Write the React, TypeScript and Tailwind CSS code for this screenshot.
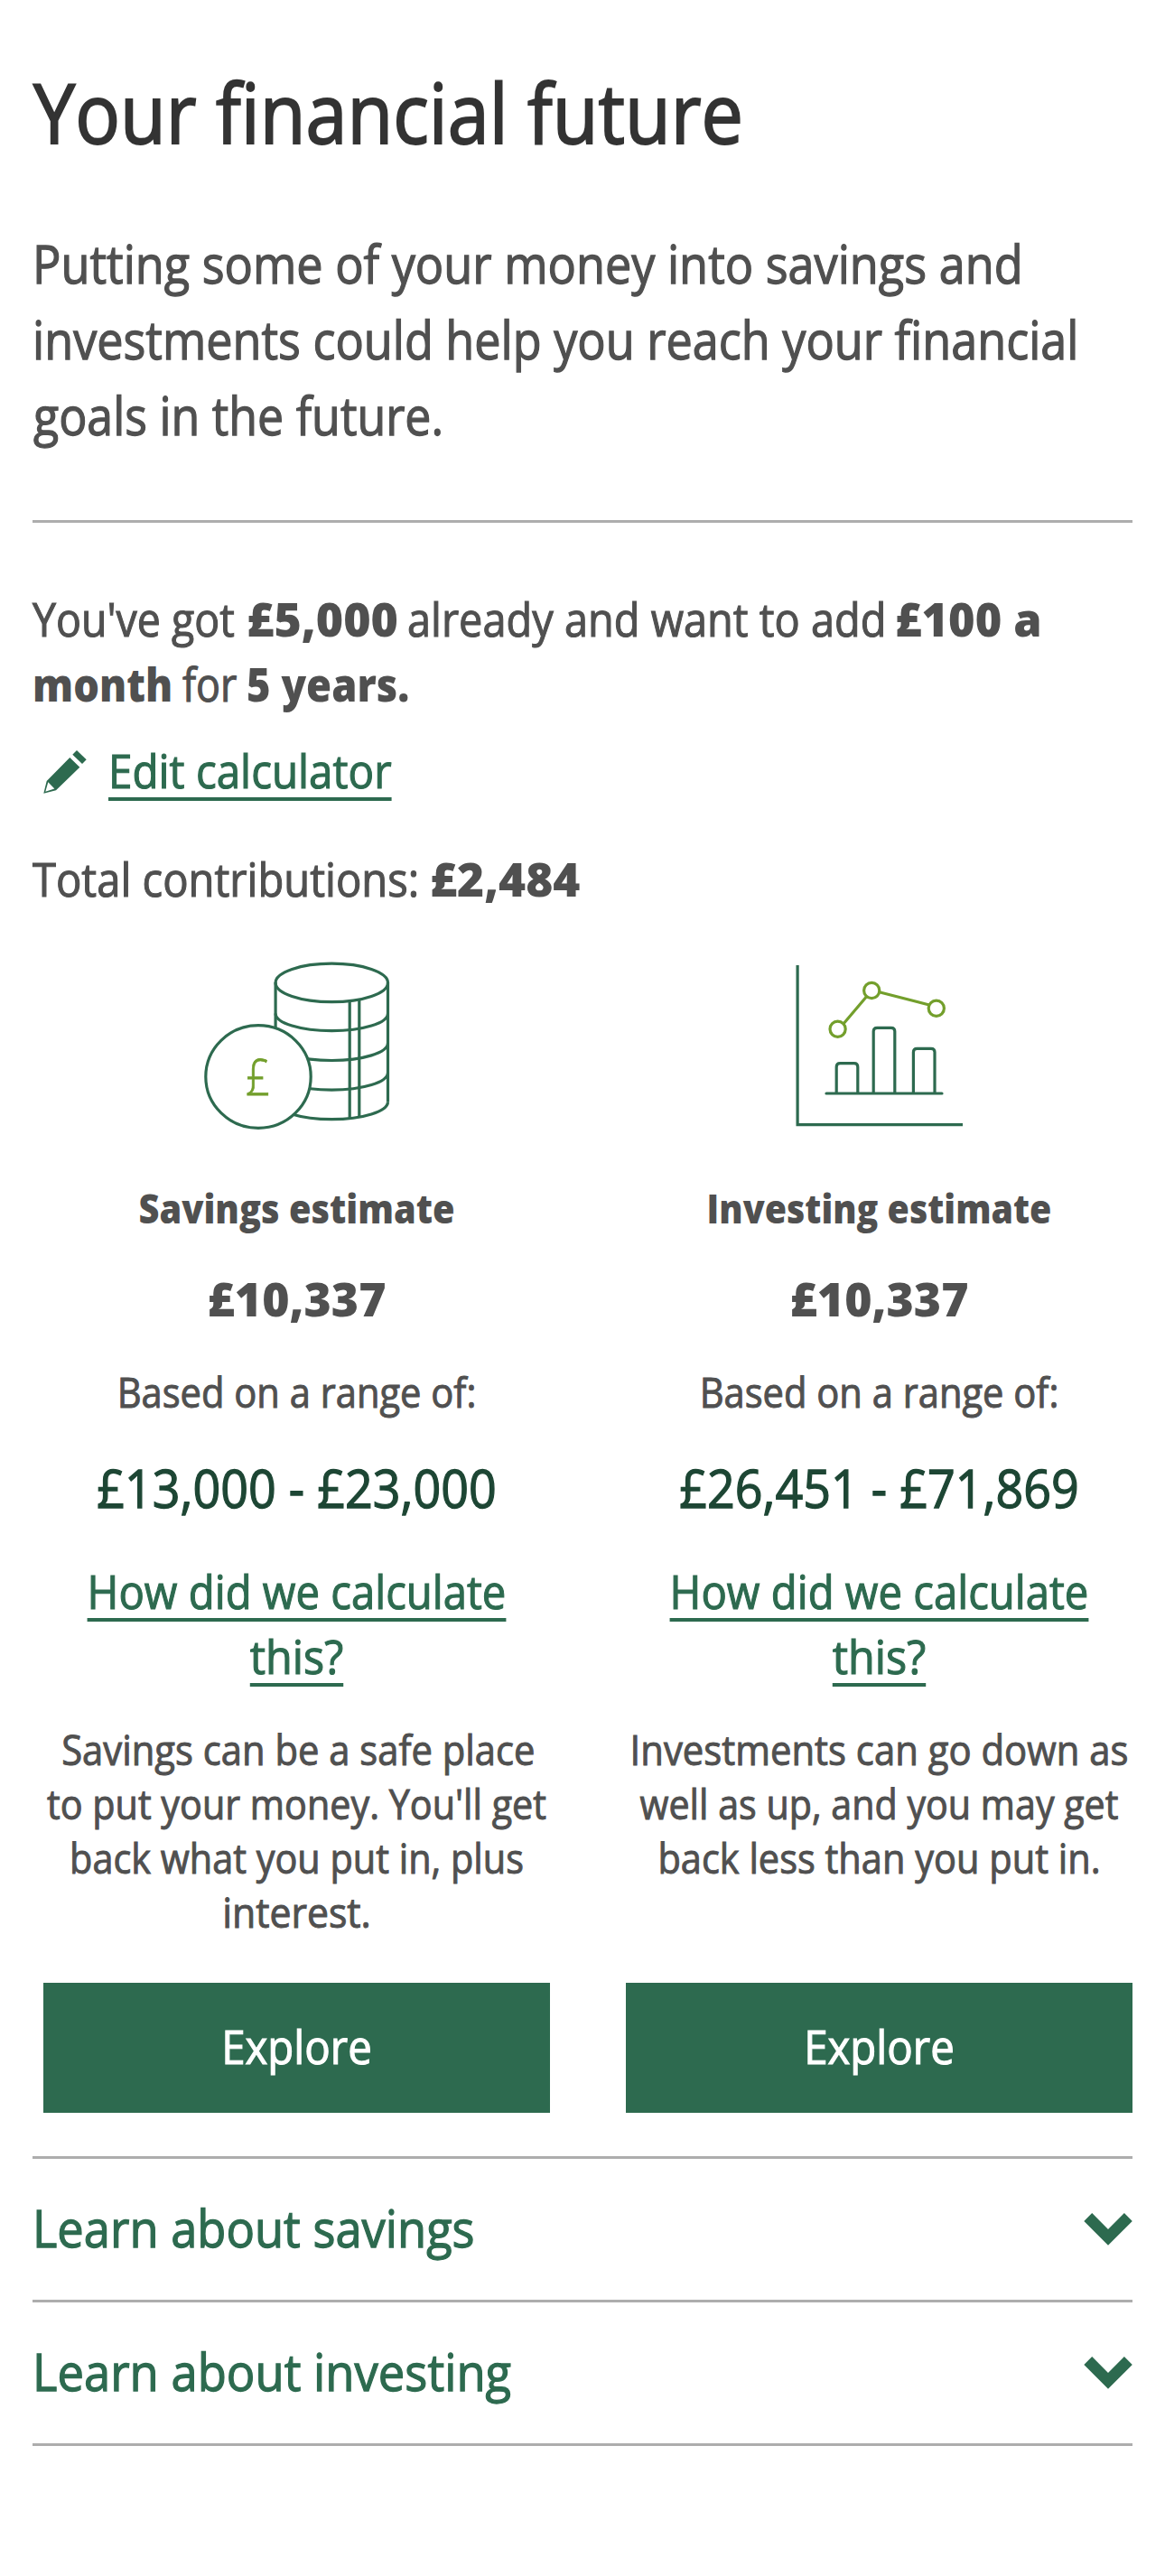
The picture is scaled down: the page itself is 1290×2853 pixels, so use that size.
import type { ReactNode } from "react";

function Line({ className = "", children }: { className?: string; children: ReactNode }) {
  return <span className={`block whitespace-nowrap [-webkit-text-stroke:0.022em] ${className}`}>{children}</span>;
}

function Strong({ className = "", children }: { className?: string; children: ReactNode }) {
  return <strong className={`block font-extrabold whitespace-nowrap ${className}`}>{children}</strong>;
}

function Divider({ className = "" }: { className?: string }) {
  return <hr className={`h-[3px] border-0 bg-[#adadad] ${className}`} />;
}

function PencilIcon() {
  return (
    <svg className="mt-[14px] h-12 w-12 shrink-0" viewBox="0 0 48 48" fill="#2d6a4f">
      <path d="M37 0 47.7 10.3 43 15 32.3 4.7Z" />
      <path fillRule="evenodd" d="M29.3 8 40.3 18.7 14 44.3 .3 47.7 3.7 34ZM5.3 35.2 2.3 45.7 12.3 42.6Z" />
    </svg>
  );
}

function CoinsIcon() {
  return (
    <svg className="mx-auto block h-[192px] w-[210px]" viewBox="0 0 210 192" fill="none" stroke="#2d6a4f" strokeWidth="3.2">
      <ellipse cx="143.3" cy="26.4" rx="62.2" ry="21.2" />
      <path d="M81.1 26V82M205.5 26V158.3" />
      <path d="M81.1 60.5A62.2 19.2 0 0 0 205.5 60.5" />
      <path d="M81.1 93.3A62.2 19.2 0 0 0 205.5 93.3" />
      <path d="M81.1 126A62.2 19.2 0 0 0 205.5 126" />
      <path d="M81.1 158.3A62.2 19.4 0 0 0 205.5 158.3" />
      <path d="M163.2 46V176.5M173.8 44.5V175" />
      <ellipse cx="62" cy="130.5" rx="58.2" ry="56.8" fill="#fff" />
      <text
        x="0"
        y="0"
        transform="translate(61.6 150.5) scale(.86 1)"
        textAnchor="middle"
        fill="#739f2c"
        stroke="#739f2c"
        strokeWidth="0.8"
        className="font-['Open_Sans',sans-serif] text-[55px] font-light"
      >
        £
      </text>
    </svg>
  );
}

function ChartIcon() {
  return (
    <svg className="mx-auto block h-[192px] w-[188px]" viewBox="0 0 188 192" fill="none" stroke="#2d6a4f" strokeWidth="3.2">
      <path d="M3.1 7V183.7H186" />
      <path d="M35 149H163" strokeLinecap="round" />
      <path d="M46.2 149V119.7Q46.2 115.7 50.2 115.7H65.8Q69.8 115.7 69.8 119.7V149" />
      <path d="M87.2 149V80.3Q87.2 76.3 91.2 76.3H106.8Q110.8 76.3 110.8 80.3V149" />
      <path d="M131.4 149V103.3Q131.4 99.3 135.4 99.3H151Q155 99.3 155 103.3V149" />
      <g stroke="#739f2c">
        <circle cx="47.6" cy="77.8" r="8.6" />
        <circle cx="85.2" cy="35" r="8.6" />
        <circle cx="156.8" cy="54.7" r="8.6" />
        <path d="M54.3 71.5 79.3 42M94.5 37 148.9 51" />
      </g>
    </svg>
  );
}

function Chevron() {
  return (
    <svg className="h-9 w-[54px]" viewBox="0 0 54 36" fill="#2d6a4f">
      <path d="M.3 9 9.2 0 27 17.9 44.9 0 53.8 9 27 35.8Z" />
    </svg>
  );
}

function Estimate({
  icon,
  title,
  range,
  children,
}: {
  icon: ReactNode;
  title: ReactNode;
  range: string;
  children: ReactNode;
}) {
  return (
    <section className="flex w-[561px] flex-col text-center">
      {icon}
      <h2 className="mt-[54px] text-[45px] leading-[60px]">{title}</h2>
      <p className="mt-[34px] text-[51px] leading-[72px]">
        <Strong className="scale-x-[1.015]">£10,337</Strong>
      </p>
      <p className="mt-[38px] text-[45px] leading-[60px]">
        <Line className="scale-x-[0.926]">Based on a range of:</Line>
      </p>
      <p className="mt-[34px] text-[58px] leading-[84px] text-[#1d4634]">
        <Line className="scale-x-[0.928]">{range}</Line>
      </p>
      <a
        href="#"
        className="mt-9 text-[51px] leading-[72px] text-[#2d6a4f] underline decoration-[4px] underline-offset-[10px]"
      >
        <Line className="scale-x-[0.927]">How did we calculate</Line>
        <Line className="scale-x-[0.952]">this?</Line>
      </a>
      <p className="mt-[38px] h-[240px] text-[45px] leading-[60px]">{children}</p>
      <button className="mt-12 h-36 bg-[#2d6a4f] pb-[3px] text-[51px] text-white">
        <Line className="scale-x-[0.93]">Explore</Line>
      </button>
    </section>
  );
}

function AccordionRow({ children }: { children: ReactNode }) {
  return (
    <button className="flex h-[156px] w-full items-center justify-between text-[57px] text-[#2d6a4f]">
      {children}
      <Chevron />
    </button>
  );
}

export default function App() {
  return (
    <main className="min-h-[2853px] w-[1290px] overflow-hidden bg-white px-9 pt-[70px] font-['Open_Sans',sans-serif] text-[#505050]">
      <h1 className="text-[91px] leading-[108px] text-[#333333]">
        <Line className="ml-px origin-left scale-x-[0.909]">Your financial future</Line>
      </h1>

      <p className="mt-[72px] text-[58px] leading-[84px]">
        <Line className="origin-left scale-x-[0.9]">Putting some of your money into savings and</Line>
        <Line className="origin-left scale-x-[0.899]">investments could help you reach your financial</Line>
        <Line className="ml-px origin-left scale-x-[0.894]">goals in the future.</Line>
      </p>

      <Divider className="mt-[74px]" />

      <div className="mt-[70px] text-[51px] leading-[72px]">
        <p className="flex">
          <Line className="w-[237px] origin-left scale-x-[0.911]">You've got</Line>
          <Strong className="w-[178px] origin-left scale-x-[1.017]">£5,000</Strong>
          <Line className="w-[540px] origin-left scale-x-[0.92]">already and want to add</Line>
          <Strong className="w-[167px] origin-left scale-x-[0.989]">£100 a</Strong>
        </p>
        <p className="flex">
          <Strong className="w-[166px] origin-left scale-x-[0.885]">month</Strong>
          <Line className="w-[71px] origin-left scale-x-[0.879]">for</Line>
          <Strong className="w-[204px] origin-left scale-x-[0.89]">5 years.</Strong>
        </p>
        <a
          href="#"
          className="mt-6 ml-3 flex h-[72px] items-start gap-6 text-[#2d6a4f] underline decoration-[4px] underline-offset-[10px]"
        >
          <PencilIcon />
          <Line className="origin-left scale-x-[0.933]">Edit calculator</Line>
        </a>
        <p className="mt-12 flex">
          <Line className="w-[440px] origin-left scale-x-[0.925]">Total contributions:</Line>
          <Strong className="origin-left scale-x-[1.007]">£2,484</Strong>
        </p>
      </div>

      <div className="mt-[53px] flex gap-[84px] pl-3">
        <Estimate
          icon={<CoinsIcon />}
          title={<Strong className="scale-x-[0.883]">Savings estimate</Strong>}
          range="£13,000 - £23,000"
        >
          <Line className="scale-x-[0.928]">Savings can be a safe place</Line>
          <Line className="-mx-6 scale-x-[0.918]">to put your money. You'll get</Line>
          <Line className="scale-x-[0.92]">back what you put in, plus</Line>
          <Line className="scale-x-[0.95]">interest.</Line>
        </Estimate>
        <Estimate
          icon={<ChartIcon />}
          title={<Strong className="scale-x-[0.874]">Investing estimate</Strong>}
          range="£26,451 - £71,869"
        >
          <Line className="-mx-6 scale-x-[0.93]">Investments can go down as</Line>
          <Line className="-mx-6 scale-x-[0.916]">well as up, and you may get</Line>
          <Line className="scale-x-[0.923]">back less than you put in.</Line>
        </Estimate>
      </div>

      <Divider className="mt-12" />
      <AccordionRow>
        <Line className="origin-left scale-x-[0.92] pb-[3px]">Learn about savings</Line>
      </AccordionRow>
      <Divider />
      <AccordionRow>
        <Line className="origin-left scale-x-[0.922] pb-[3px]">Learn about investing</Line>
      </AccordionRow>
      <Divider />
    </main>
  );
}
